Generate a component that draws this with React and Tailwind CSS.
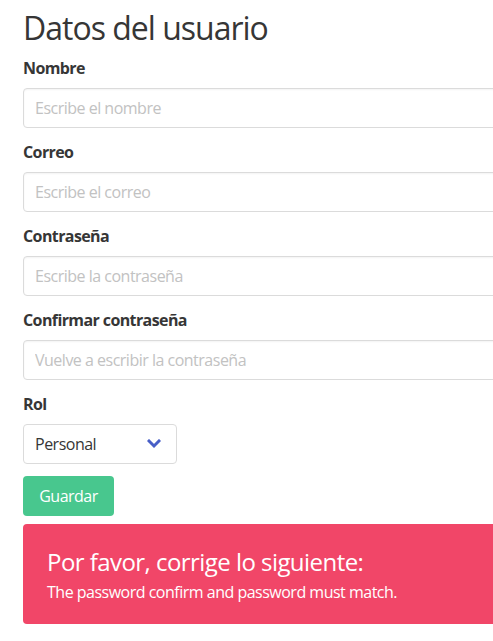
import React from "react";

const fields = [
  { label: "Nombre", placeholder: "Escribe el nombre" },
  { label: "Correo", placeholder: "Escribe el correo" },
  { label: "Contraseña", placeholder: "Escribe la contraseña" },
  { label: "Confirmar contraseña", placeholder: "Vuelve a escribir la contraseña" },
];

function Field({ label, placeholder }) {
  return (
    <div className="mb-3">
      <label className="block mb-2 text-base leading-6 font-bold text-[#363636] tracking-[-0.6px]">{label}</label>
      <input
        type="text"
        placeholder={placeholder}
        className="block w-full h-10 px-[11px] rounded border border-[#dbdbdb] bg-white text-base tracking-[-0.5px] text-[#363636] placeholder-[#c2c2c2] shadow-[inset_0_1px_2px_rgba(10,10,10,0.05)] focus:outline-none"
      />
    </div>
  );
}

export default function App() {
  return (
    <div className="w-[493px] h-[641px] overflow-hidden bg-white font-['Open_Sans',sans-serif]">
      <div className="w-[620px] pl-[23px] pt-[10px]">
        <h1 className="text-[32px] leading-9 font-normal text-[#363636] mb-[10px] tracking-[-1px]">Datos del usuario</h1>
        <form>
          {fields.map((f) => (
            <Field key={f.label} {...f} />
          ))}
          <div className="mb-3">
            <label className="block mb-2 text-base leading-6 font-bold text-[#363636] tracking-[-0.6px]">Rol</label>
            <div className="relative w-[154px]">
              <select className="block w-full h-10 pl-[11px] pr-10 appearance-none rounded border border-[#dbdbdb] bg-white text-base tracking-[-0.5px] text-[#363636] focus:outline-none">
                <option>Personal</option>
              </select>
              <svg className="absolute right-[16px] top-[15px] pointer-events-none" width="14" height="10" viewBox="0 0 14 10">
                <polyline points="2,2 7,7 12,2" fill="none" stroke="#485fc7" strokeWidth="3" strokeLinecap="square" />
              </svg>
            </div>
          </div>
          <button type="button" className="h-10 w-[91px] rounded bg-[#48c78e] text-base tracking-[-0.5px] text-white">
            Guardar
          </button>
          <div className="mt-2 rounded bg-[#f14668] text-white pt-5 pb-5 pl-6 pr-10">
            <p className="text-2xl leading-9 tracking-[-0.55px]">Por favor, corrige lo siguiente:</p>
            <p className="text-base leading-6 tracking-[-0.5px]">The password confirm and password must match.</p>
          </div>
        </form>
      </div>
    </div>
  );
}
